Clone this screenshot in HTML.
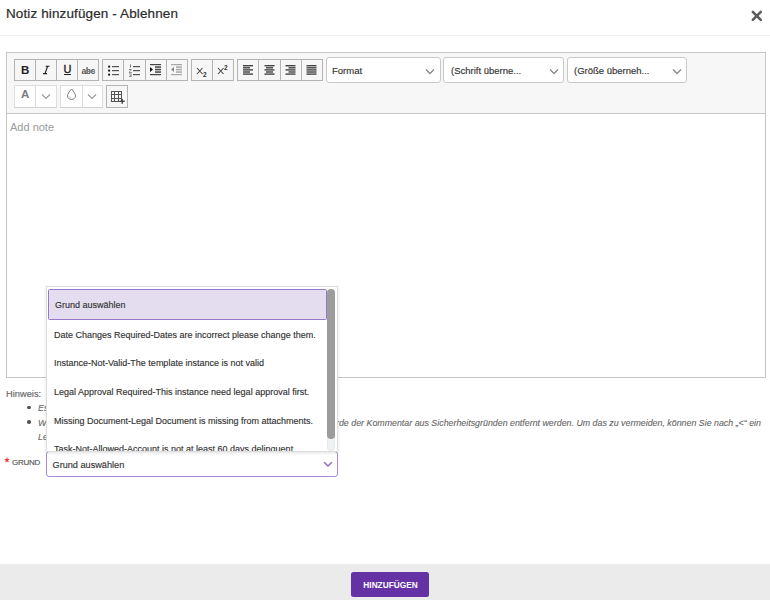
<!DOCTYPE html>
<html><head><meta charset="utf-8">
<style>
*{box-sizing:border-box;margin:0;padding:0}
html,body{width:770px;height:600px;overflow:hidden;background:#fff;font-family:"Liberation Sans",sans-serif;color:#333}
.a{position:absolute}
#title{left:6px;top:5.5px;font-size:13.5px;letter-spacing:0.12px;color:#2b2b2b;white-space:nowrap;-webkit-text-stroke:0.2px #2b2b2b}
#close{left:750px;top:9px;width:13px;height:13px}
#sep{left:0;top:35px;width:770px;height:1px;background:#f0f0f0}
#editor{left:6px;top:52px;width:760px;height:326px;border:1px solid #c6c6c6;background:#fff}
#toolbar{left:0;top:0;width:758px;height:61px;background:#f7f7f7;border-bottom:1px solid #c6c6c6}
.grp{position:absolute;height:22px;border:1px solid #b4b4b4;background:#f6f6f6}
.grp.dis{border-color:#dedede;border-bottom-color:#d0d0d0;background:#fff}
.dv{position:absolute;width:1px;height:22px;background:#b4b4b4}
.dv.dis{background:#dcdcdc}
.gl{position:absolute;white-space:nowrap;line-height:1}
.sel{position:absolute;height:26px;border:1px solid #c9c9c9;border-radius:3px;background:#fff;font-size:9.5px;color:#333;white-space:nowrap;-webkit-text-stroke:0.15px #333}
.sel span{position:absolute;left:6px;top:7px}
.sel svg{position:absolute;top:10px}
#placeholder{left:10px;top:121px;font-size:11px;color:#9a9a9a}
#hinweis{left:6px;top:388.5px;font-size:9.3px;color:#666;-webkit-text-stroke:0.15px #666}
.li{position:absolute;font-size:8.85px;color:#666;font-style:italic;white-space:nowrap;-webkit-text-stroke:0.1px #666}
.dot{position:absolute;width:3.5px;height:3.5px;border-radius:50%;background:#555}
#grund{left:12px;top:458px;font-size:8px;letter-spacing:-0.25px;color:#555;-webkit-text-stroke:0.15px #555}
#star{left:4px;top:455px;font-size:10px;color:#e53935}
#select{left:46px;top:451px;width:292px;height:26px;border:1px solid #a78bd8;border-radius:3px;background:#fff}
#select span{position:absolute;left:5.5px;top:7.5px;font-size:9.2px;letter-spacing:-0.02px;color:#333;white-space:nowrap;-webkit-text-stroke:0.15px #333}
#dd{left:46px;top:286px;width:292px;height:166px;background:#fff;border:1px solid #dedede;box-shadow:0 1px 3px rgba(0,0,0,.12);overflow:hidden}
.it{position:absolute;left:0;width:281px;font-size:9.4px;color:#333;white-space:nowrap;-webkit-text-stroke:0.15px #333}
.it span{position:absolute;left:7.3px;transform:scaleX(0.96);transform-origin:0 0;top:-1.5px}
#hl{left:1px;top:2px;width:279px;height:31px;background:#e4ddf0;border:1px solid #9478cc;border-radius:1.5px}
#track{left:279.5px;top:2px;width:8px;height:162px;border-radius:4px;background:#eef2f2;box-shadow:inset 0 0 0 0.5px #e0e4e4}
#thumb{left:279.5px;top:2px;width:8px;height:150px;border-radius:4px;background:#9c9c9c}
#footer{left:0;top:564px;width:770px;height:36px;background:#ebebeb}
#btn{left:351px;top:572px;width:78px;height:25px;background:#6532a6;border-radius:2.5px;color:#fff;font-size:9px;font-weight:bold;text-align:center;line-height:27px}
</style></head><body>
<div class="a" id="title">Notiz hinzufügen - Ablehnen</div>
<svg class="a" id="close" viewBox="0 0 13 13"><path d="M2.8 2.8L10.8 10.8M10.8 2.8L2.8 10.8" stroke="#5a5a5a" stroke-width="2.5" stroke-linecap="round"/></svg>
<div class="a" id="sep"></div>

<div class="a" id="editor">
  <div class="a" id="toolbar">
  </div>
</div>
<div id="tbwrap">
<div class="grp" style="left:14px;top:59px;width:85px"></div>
<div class="dv" style="left:35px;top:59px"></div><div class="dv" style="left:56px;top:59px"></div><div class="dv" style="left:77px;top:59px"></div>
<div class="gl" style="left:21px;top:65px;font-weight:bold;font-size:11.5px;color:#222">B</div>
<svg class="a" style="left:0;top:0" width="60" height="80"><path d="M45.6 66.2H49.6M47.6 66.2L45 73.6M43 73.6H47" stroke="#222" stroke-width="1.15" fill="none"/></svg>
<div class="gl" style="left:63.5px;top:64px;font-size:11px;color:#222;-webkit-text-stroke:0.35px #222">U</div><div class="a" style="left:64px;top:74px;width:7px;height:1.3px;background:#222"></div>
<div class="gl" style="left:81.5px;top:66.5px;font-size:8.5px;font-weight:bold;color:#555;letter-spacing:-0.45px">abc</div><div class="a" style="left:82px;top:70.5px;width:12.5px;height:0.8px;background:#888"></div>

<div class="grp" style="left:102px;top:59px;width:86px"></div>
<div class="dv" style="left:123px;top:59px"></div><div class="dv" style="left:145px;top:59px"></div><div class="dv" style="left:166px;top:59px"></div>


<div class="grp" style="left:191px;top:59px;width:43px"></div>
<div class="dv" style="left:212px;top:59px"></div>
<div class="grp" style="left:237px;top:59px;width:86px"></div>
<div class="dv" style="left:258px;top:59px"></div><div class="dv" style="left:280px;top:59px"></div><div class="dv" style="left:301px;top:59px"></div>

<div class="grp dis" style="left:14px;top:85px;width:43px;height:23px"></div>
<div class="dv dis" style="left:35px;top:85px;height:23px"></div>
<div class="gl" style="left:21px;top:89px;font-weight:bold;font-size:11.5px;color:#7c7c7c">A</div>
<div class="grp dis" style="left:60px;top:85px;width:43px;height:23px"></div>
<div class="dv dis" style="left:82px;top:85px;height:23px"></div>
<div class="grp" style="left:106px;top:85px;width:22px;height:23px"></div>

<svg class="a" style="left:0;top:0" width="330" height="112">
 <g fill="#222">
  <rect x="108" y="65.5" width="2.2" height="2.2" rx="1"/><rect x="108" y="69.5" width="2.2" height="2.2" rx="1"/><rect x="108" y="73.5" width="2.2" height="2.2" rx="1"/>
 </g>
 <g fill="#555">
  <rect x="112" y="66" width="7" height="1.2"/><rect x="112" y="70" width="7" height="1.2"/><rect x="112" y="74" width="7" height="1.2"/>
  <rect x="133" y="66" width="7" height="1.2"/><rect x="133" y="70" width="7" height="1.2"/><rect x="133" y="74" width="7" height="1.2"/>
 </g>
 <g fill="#777">
  <rect x="130" y="64.5" width="1" height="3"/><path d="M129 69h2.5v1l-2 2h2.3v0.8h-3v-0.8l2-2h-1.8z"/><path d="M129 73.5h2.5v3.5h-2.5v-0.8h1.7v-0.6h-1.2v-0.6h1.2v-0.7h-1.7z"/>
 </g>
 <g fill="#444">
  <rect x="150" y="64" width="11" height="1.2"/><rect x="155" y="66.3" width="6" height="1.5"/><rect x="155" y="68.8" width="6" height="1.5"/><rect x="155" y="71.3" width="6" height="1.5"/><rect x="150" y="74" width="11" height="1.2"/>
  <path d="M150 67L153 69.5L150 72Z" fill="#111"/>
 </g>
 <g fill="#a8a8a8">
  <rect x="171" y="64" width="11" height="1.2"/><rect x="176" y="66.3" width="6" height="1.5"/><rect x="176" y="68.8" width="6" height="1.5"/><rect x="176" y="71.3" width="6" height="1.5"/><rect x="171" y="74" width="11" height="1.2"/>
  <path d="M174 67L171 69.5L174 72Z" fill="#888"/>
 </g>
 <g stroke="#444" stroke-width="1.1" fill="none">
  <path d="M197 68L202.5 74M202.5 68L197 74"/>
  <path d="M218 68L223.5 74M223.5 68L218 74"/>
 </g>
 <g fill="#333" font-family="Liberation Sans" font-weight="bold" font-size="6">
  <text x="203" y="76.5" font-size="6.5">2</text><text x="224" y="69.5" font-size="6.5">2</text>
 </g>
 <g fill="#444">
  <rect x="243" y="65" width="10" height="1.4"/><rect x="243" y="67.1" width="7" height="1.4"/><rect x="243" y="69.2" width="10" height="1.4"/><rect x="243" y="71.3" width="7" height="1.4"/><rect x="243" y="73.4" width="10" height="1.4"/><rect x="264.5" y="65" width="10" height="1.4"/><rect x="266.0" y="67.1" width="7" height="1.4"/><rect x="264.5" y="69.2" width="10" height="1.4"/><rect x="266.0" y="71.3" width="7" height="1.4"/><rect x="264.5" y="73.4" width="10" height="1.4"/><rect x="285.5" y="65" width="10" height="1.4"/><rect x="288.5" y="67.1" width="7" height="1.4"/><rect x="285.5" y="69.2" width="10" height="1.4"/><rect x="288.5" y="71.3" width="7" height="1.4"/><rect x="285.5" y="73.4" width="10" height="1.4"/><rect x="306.5" y="65" width="10" height="1.4"/><rect x="306.5" y="67.1" width="10" height="1.4"/><rect x="306.5" y="69.2" width="10" height="1.4"/><rect x="306.5" y="71.3" width="10" height="1.4"/><rect x="306.5" y="73.4" width="10" height="1.4"/>
 </g>
 <g fill="none" stroke="#999" stroke-width="1.1">
  <path d="M42 94.5L46 98.5L50 94.5"/>
  <path d="M88 94.5L92 98.5L96 94.5"/>
  <path stroke="#808080" stroke-width="1" d="M71.5 89C69 92 67.5 94 67.5 96C67.5 98 69.3 99.5 71.5 99.5C73.7 99.5 75.5 98 75.5 96C75.5 94 74 92 71.5 89Z"/><path stroke="#999" stroke-width="0.8" d="M69.5 96.5L70.5 97.8"/>
 </g>
 <g fill="#444">
  </g>
 <g fill="none" stroke="#555" stroke-width="1" shape-rendering="crispEdges">
  <path d="M111.5 91.5h10v10h-10z M111.5 94.8h10 M111.5 98.2h10 M114.8 91.5v10 M118.2 91.5v10"/>
 </g>
 <g fill="#444">
  <rect x="121.5" y="98.8" width="1.4" height="5"/><rect x="119.7" y="100.6" width="5" height="1.4"/>
</g>
</svg>
<div class="sel" style="left:326px;top:57px;width:115px"><span style="left:5px">Format</span><svg style="left:98px" width="10" height="7" viewBox="0 0 10 7"><path d="M1 1.5L5 5.5L9 1.5" fill="none" stroke="#888" stroke-width="1.3"/></svg></div>
<div class="sel" style="left:443px;top:57px;width:121px"><span style="left:7px">(Schrift überne...</span><svg style="left:105px" width="10" height="7" viewBox="0 0 10 7"><path d="M1 1.5L5 5.5L9 1.5" fill="none" stroke="#888" stroke-width="1.3"/></svg></div>
<div class="sel" style="left:567px;top:57px;width:120px"><span>(Größe überneh...</span><svg style="left:104px" width="10" height="7" viewBox="0 0 10 7"><path d="M1 1.5L5 5.5L9 1.5" fill="none" stroke="#888" stroke-width="1.3"/></svg></div>

</div>
<div class="a" id="placeholder">Add note</div>

<div class="a" id="hinweis">Hinweis:</div>
<div class="dot" style="left:27px;top:405.5px"></div>
<div class="li" style="left:38px;top:403px">Es dürfen keine HTML-Tags verwendet werden.</div>
<div class="dot" style="left:27px;top:420px"></div>
<div class="li" style="left:38px;top:417.5px">Wenn Sie ein „&lt;“ direkt vor einem Buchstaben eingeben, wü</div>
<div class="li" style="left:336px;top:417.5px">rde der Kommentar aus Sicherheitsgründen entfernt werden. Um das zu vermeiden, können Sie nach „&lt;“ ein</div>
<div class="li" style="left:38px;top:432px">Leerzeichen einfügen.</div>

<svg class="a" style="left:4px;top:457px" width="6" height="6" viewBox="0 0 10 10"><path d="M5 0L6.2 3.4L9.8 3.5L7 5.8L8 9.3L5 7.3L2 9.3L3 5.8L0.2 3.5L3.8 3.4Z" fill="#ef3b3b"/></svg>
<div class="a" id="grund">GRUND</div>
<div class="a" id="select"><span>Grund auswählen</span>
<svg class="a" style="left:276px;top:9px" width="10" height="7" viewBox="0 0 10 7"><path d="M1.2 1.2L5 5L8.8 1.2" fill="none" stroke="#8a68c8" stroke-width="1.4"/></svg>
</div>

<div class="a" id="dd">
  <div class="a" id="hl"></div>
  <div class="it" style="top:13px"><span style="left:8px">Grund auswählen</span></div>
  <div class="it" style="top:43px"><span>Date Changes Required-Dates are incorrect please change them.</span></div>
  <div class="it" style="top:71px"><span>Instance-Not-Valid-The template instance is not valid</span></div>
  <div class="it" style="top:100px"><span>Legal Approval Required-This instance need legal approval first.</span></div>
  <div class="it" style="top:129px"><span>Missing Document-Legal Document is missing from attachments.</span></div>
  <div class="it" style="top:157px"><span>Task-Not-Allowed-Account is not at least 60 days delinquent</span></div>
  <div class="a" id="track"></div>
  <div class="a" id="thumb"></div>
</div>

<div class="a" id="footer"></div>
<div class="a" id="btn"><span style="display:inline-block;transform:scaleX(0.92)">HINZUFÜGEN</span></div>
</body></html>
